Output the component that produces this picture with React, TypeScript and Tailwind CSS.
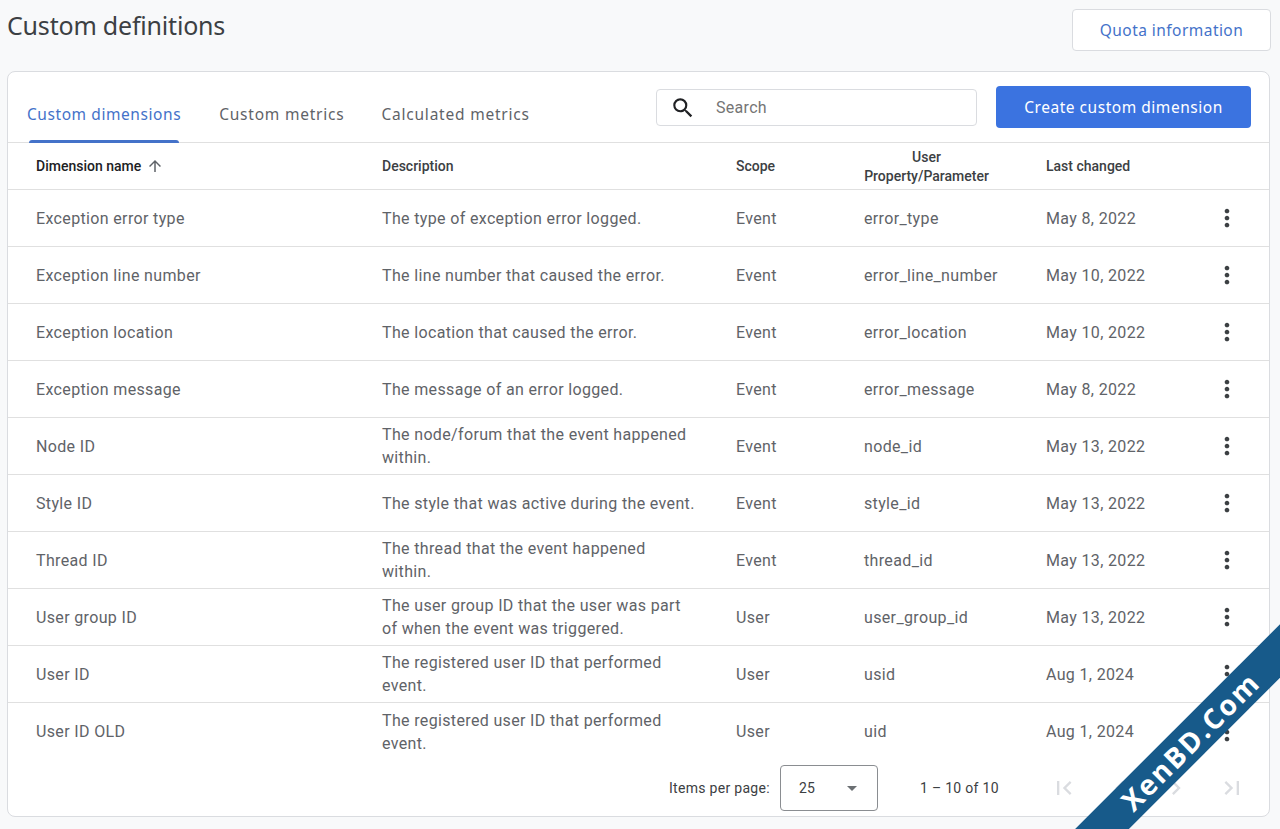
import React from "react";
import { MdSearch, MdMoreVert, MdArrowUpward, MdFirstPage, MdLastPage, MdChevronLeft, MdChevronRight, MdArrowDropDown } from "react-icons/md";

const rows: [string, string[], string, string, string][] = [
  ["Exception error type", ["The type of exception error logged."], "Event", "error_type", "May 8, 2022"],
  ["Exception line number", ["The line number that caused the error."], "Event", "error_line_number", "May 10, 2022"],
  ["Exception location", ["The location that caused the error."], "Event", "error_location", "May 10, 2022"],
  ["Exception message", ["The message of an error logged."], "Event", "error_message", "May 8, 2022"],
  ["Node ID", ["The node/forum that the event happened", "within."], "Event", "node_id", "May 13, 2022"],
  ["Style ID", ["The style that was active during the event."], "Event", "style_id", "May 13, 2022"],
  ["Thread ID", ["The thread that the event happened", "within."], "Event", "thread_id", "May 13, 2022"],
  ["User group ID", ["The user group ID that the user was part", "of when the event was triggered."], "User", "user_group_id", "May 13, 2022"],
  ["User ID", ["The registered user ID that performed", "event."], "User", "usid", "Aug 1, 2024"],
  ["User ID OLD", ["The registered user ID that performed", "event."], "User", "uid", "Aug 1, 2024"],
];

const cols = "grid grid-cols-[346px_354px_128px_182px_160px_1fr] pl-7 items-center";

export default function App() {
  return (
    <div className="relative h-[829px] w-[1280px] overflow-hidden bg-[#f8f9fa] font-['Roboto',sans-serif] text-[#5f6368]">
      <div className="flex justify-between items-start pl-[7px] pr-[9px] pt-[9px] h-[71px]">
        <h1 className="font-['Noto_Sans',sans-serif] text-[25px] leading-[34px] -mt-[1px] tracking-[-0.2px] text-[#3c4043]">Custom definitions</h1>
        <button className="h-[42px] w-[199px] rounded bg-white border border-[#dadce0] pt-[2px] font-['Noto_Sans',sans-serif] text-[15.5px] text-[#4472c9] tracking-[0.45px]">Quota information</button>
      </div>

      <div className="mx-[7px] h-[746px] w-[1263px] rounded-lg border border-[#dadce0] bg-white">
        <div className="relative flex h-[71px] items-start border-b border-[#e0e0e0]">
          <div className="flex pl-[19px] pt-[30px] font-['Noto_Sans',sans-serif] text-[15.5px] leading-6 tracking-[0.57px]">
            <span className="relative h-[41px] text-[#4472c9]">
              Custom dimensions
              <span className="absolute left-[2px] right-[2px] bottom-0 h-[3px] rounded-t bg-[#4472c9]" />
            </span>
            <span className="ml-[38px] tracking-[0.78px]">Custom metrics</span>
            <span className="ml-[37px] tracking-[0.78px]">Calculated metrics</span>
          </div>
          <div className="ml-auto flex items-start pr-[18px] pt-[14px]">
            <div className="mt-[3px] flex h-[37px] w-[321px] items-center rounded border border-[#dadce0] pl-[13px] text-[#202124]">
              <MdSearch size={26} />
              <span className="ml-[20px] text-[16px] tracking-[0.3px] text-[#757575]">Search</span>
            </div>
            <button className="ml-[19px] h-[42px] w-[255px] rounded bg-[#3b73e0] pt-[2px] font-['Noto_Sans',sans-serif] text-[15.5px] text-white tracking-[0.53px]">Create custom dimension</button>
          </div>
        </div>

        <div className={`${cols} h-[47px] border-b border-[#e0e0e0] text-[14px] font-medium text-[#3c4043]`}>
          <div className="flex items-center text-[#202124]">
            Dimension name
            <MdArrowUpward size={18} className="ml-[5px] text-[#5f6368]" />
          </div>
          <div>Description</div>
          <div>Scope</div>
          <div className="mt-[2px] w-[125px] text-center leading-[19px]">User<br />Property/Parameter</div>
          <div>Last changed</div>
        </div>

        {rows.map((r, i) => (
          <div key={r[0]} className={`${cols} h-[57px] text-[16px] leading-[23px] tracking-[0.35px] ${i < rows.length - 1 ? "border-b border-[#e0e0e0]" : ""}`}>
            <div>{r[0]}</div>
            <div>{r[1].map((l) => <div key={l}>{l}</div>)}</div>
            <div>{r[2]}</div>
            <div>{r[3]}</div>
            <div>{r[4]}</div>
            <div className="flex justify-start text-[#3c4043]">
              <MdMoreVert size={28} className="ml-[7px]" />
            </div>
          </div>
        ))}

        <div className="flex h-[56px] items-center pl-[661px] text-[14px] tracking-[0.3px]">
          <span className="text-[#3c4043]">Items per page:</span>
          <div className="ml-[10px] flex h-[46px] w-[98px] shrink-0 items-center justify-between rounded border border-[#8a8d91] pl-[18px] pr-[16px] text-[#3c4043]">
            <span>25</span>
            <MdArrowDropDown size={24} className="-mr-[3px] text-[#6b6f73]" />
          </div>
          <span className="ml-[42px] w-[79px] whitespace-nowrap text-[#3c4043]">1 – 10 of 10</span>
          <div className="ml-[51px] flex gap-[28px] text-[#dadce0]">
            <MdFirstPage size={28} />
            <MdChevronLeft size={28} />
            <MdChevronRight size={28} />
            <MdLastPage size={28} />
          </div>
        </div>
      </div>

      <div className="absolute left-[1000px] top-[722px] flex h-[38px] w-[380px] -rotate-45 items-center justify-center bg-[#175a8a] font-['Open_Sans',sans-serif] text-[28px] font-bold tracking-[2px] text-white">
        XenBD.Com
      </div>
    </div>
  );
}
